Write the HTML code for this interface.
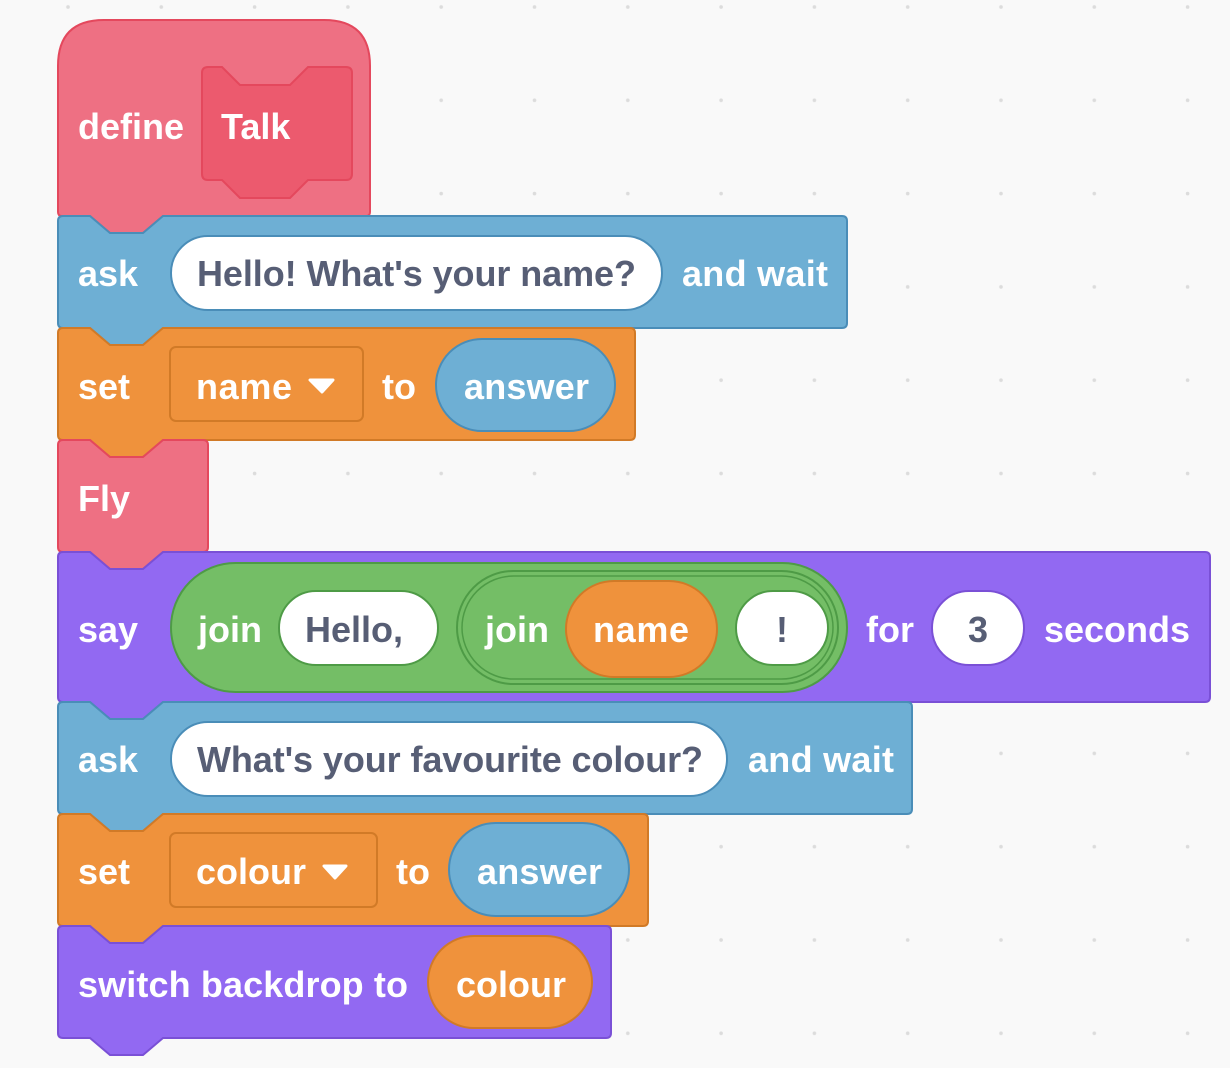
<!DOCTYPE html>
<html><head><meta charset="utf-8"><style>
html,body{margin:0;padding:0;background:#f9f9f9;}
svg{display:block}
text{font-family:"Liberation Sans",Arial,sans-serif;font-weight:bold;font-size:36px;fill:#fff}
.d{fill:#575e75}
</style></head><body>
<svg width="1230" height="1068" viewBox="0 0 1230 1068" xmlns="http://www.w3.org/2000/svg">
<defs>
<pattern id="dots" x="21" y="-40" width="93.3" height="93.3" patternUnits="userSpaceOnUse">
<circle cx="47" cy="47" r="1.8" fill="#dcdcdc"/>
</pattern>
</defs>
<rect width="1230" height="1068" fill="#f9f9f9"/>
<rect width="1230" height="1068" fill="url(#dots)"/>

<!-- define hat -->
<path d="M58,66 Q58,20 104,20 H324 Q370,20 370,66 V212 Q370,216 366,216 H163 L143,233 H110 L90,216 H62 Q58,216 58,212 Z" fill="#ee7083" stroke="#e4485d" stroke-width="2"/>
<path d="M202,73 Q202,67 208,67 H222 L240,85 H290 L308,67 H346 Q352,67 352,73 V174 Q352,180 346,180 H308 L290,198 H240 L222,180 H208 Q202,180 202,174 Z" fill="#ec5a6e" stroke="#e4485d" stroke-width="2"/>
<text x="78" y="139">define</text>
<text x="221" y="139">Talk</text>

<!-- ask1 -->
<path d="M58,221 Q58,216 63,216 H90 L110,233 H143 L163,216 H842 Q847,216 847,221 V323 Q847,328 842,328 H163 L143,345 H110 L90,328 H63 Q58,328 58,323 Z" fill="#6eafd4" stroke="#4a8db8" stroke-width="2"/>
<rect x="171" y="236" width="491" height="74" rx="37" fill="#fff" stroke="#4a8db8" stroke-width="2"/>
<text x="78" y="286">ask</text>
<text class="d" x="197" y="286" textLength="439">Hello! What's your name?</text>
<text x="682" y="286" textLength="146">and wait</text>

<!-- set1 -->
<path d="M58,333 Q58,328 63,328 H90 L110,345 H143 L163,328 H630 Q635,328 635,333 V435 Q635,440 630,440 H163 L143,457 H110 L90,440 H63 Q58,440 58,435 Z" fill="#ef923c" stroke="#d17a27" stroke-width="2"/>
<rect x="170" y="347" width="193" height="74" rx="6" fill="#ef923c" stroke="#d17a27" stroke-width="2"/>
<text x="78" y="399">set</text>
<text x="196" y="399" textLength="96">name</text>
<path d="M310,380 H333 L322,392 Z" fill="#fff" stroke="#fff" stroke-width="3" stroke-linejoin="round"/>
<text x="382" y="399">to</text>
<rect x="436" y="339" width="179" height="92" rx="46" fill="#6eafd4" stroke="#4a8db8" stroke-width="2"/>
<text x="464" y="399" textLength="125">answer</text>

<!-- Fly -->
<path d="M58,445 Q58,440 63,440 H90 L110,457 H143 L163,440 H203 Q208,440 208,445 V547 Q208,552 203,552 H163 L143,569 H110 L90,552 H63 Q58,552 58,547 Z" fill="#ee7083" stroke="#e4485d" stroke-width="2"/>
<text x="78" y="511">Fly</text>

<!-- say -->
<path d="M58,557 Q58,552 63,552 H90 L110,569 H143 L163,552 H1205 Q1210,552 1210,557 V697 Q1210,702 1205,702 H163 L143,719 H110 L90,702 H63 Q58,702 58,697 Z" fill="#9269f2" stroke="#7a50d6" stroke-width="2"/>
<rect x="171" y="563" width="676" height="129" rx="64.5" fill="#74be66" stroke="#4e9b46" stroke-width="2"/>
<rect x="279" y="591" width="159" height="74" rx="37" fill="#fff" stroke="#4e9b46" stroke-width="2"/>
<rect x="457" y="571" width="381" height="113" rx="56.5" fill="#74be66" stroke="#4e9b46" stroke-width="2"/>
<rect x="462" y="576" width="371" height="103" rx="51.5" fill="none" stroke="#4e9b46" stroke-width="1.5"/>
<rect x="566" y="581" width="151" height="96" rx="48" fill="#ef923c" stroke="#d17a27" stroke-width="2"/>
<rect x="736" y="591" width="92" height="74" rx="37" fill="#fff" stroke="#4e9b46" stroke-width="2"/>
<rect x="932" y="591" width="92" height="74" rx="37" fill="#fff" stroke="#7a50d6" stroke-width="2"/>
<text x="78" y="642">say</text>
<text x="198" y="642">join</text>
<text class="d" x="305" y="642" textLength="98">Hello,</text>
<text x="485" y="642">join</text>
<text x="593" y="642" textLength="96">name</text>
<text class="d" x="782" y="642" text-anchor="middle">!</text>
<text x="866" y="642">for</text>
<text class="d" x="978" y="642" text-anchor="middle">3</text>
<text x="1044" y="642" textLength="146">seconds</text>

<!-- ask2 -->
<path d="M58,707 Q58,702 63,702 H90 L110,719 H143 L163,702 H907 Q912,702 912,707 V809 Q912,814 907,814 H163 L143,831 H110 L90,814 H63 Q58,814 58,809 Z" fill="#6eafd4" stroke="#4a8db8" stroke-width="2"/>
<rect x="171" y="722" width="556" height="74" rx="37" fill="#fff" stroke="#4a8db8" stroke-width="2"/>
<text x="78" y="772">ask</text>
<text class="d" x="197" y="772" textLength="506">What's your favourite colour?</text>
<text x="748" y="772" textLength="146">and wait</text>

<!-- set2 -->
<path d="M58,819 Q58,814 63,814 H90 L110,831 H143 L163,814 H643 Q648,814 648,819 V921 Q648,926 643,926 H163 L143,943 H110 L90,926 H63 Q58,926 58,921 Z" fill="#ef923c" stroke="#d17a27" stroke-width="2"/>
<rect x="170" y="833" width="207" height="74" rx="6" fill="#ef923c" stroke="#d17a27" stroke-width="2"/>
<text x="78" y="884">set</text>
<text x="196" y="884" textLength="110">colour</text>
<path d="M324,866 H346 L335,878 Z" fill="#fff" stroke="#fff" stroke-width="3" stroke-linejoin="round"/>
<text x="396" y="884">to</text>
<rect x="449" y="823" width="180" height="93" rx="46.5" fill="#6eafd4" stroke="#4a8db8" stroke-width="2"/>
<text x="477" y="884" textLength="125">answer</text>

<!-- switch -->
<path d="M58,931 Q58,926 63,926 H90 L110,943 H143 L163,926 H606 Q611,926 611,931 V1033 Q611,1038 606,1038 H163 L143,1055 H110 L90,1038 H63 Q58,1038 58,1033 Z" fill="#9269f2" stroke="#7a50d6" stroke-width="2"/>
<rect x="428" y="936" width="164" height="92" rx="46" fill="#ef923c" stroke="#d17a27" stroke-width="2"/>
<text x="78" y="997" textLength="330">switch backdrop to</text>
<text x="456" y="997" textLength="110">colour</text>
</svg>
</body></html>
